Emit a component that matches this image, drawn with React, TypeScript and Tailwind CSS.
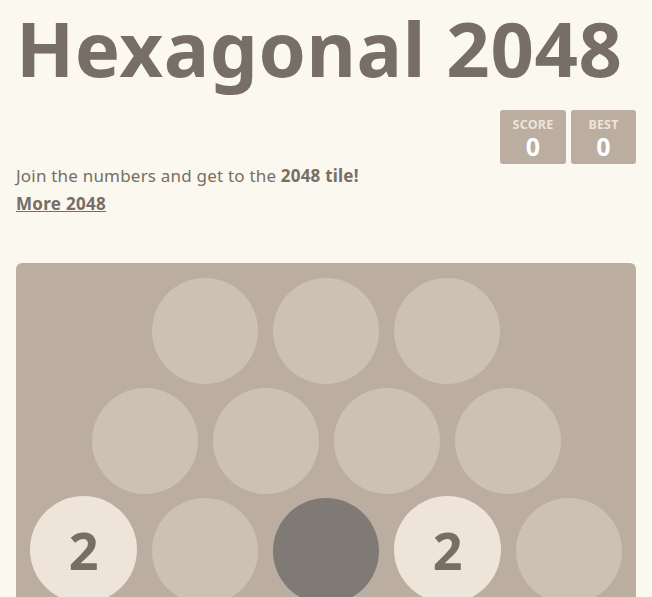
import React from "react";

type Tile = { v?: number; dark?: boolean };

const rows: Tile[][] = [
  [{}, {}, {}],
  [{}, {}, {}, {}],
  [{ v: 2 }, {}, { dark: true }, { v: 2 }, {}],
  [{}, {}, {}, {}],
  [{}, {}, {}],
];

function Cell({ t }: { t: Tile }) {
  if (t.v) {
    return (
      <div className="w-[107px] h-[107px] -mt-[2px] rounded-full bg-[#eee4da] flex items-center justify-center text-[#776e65] text-[52px] font-bold leading-none">
        {t.v}
      </div>
    );
  }
  if (t.dark) {
    return <div className="w-[106px] h-[106px] rounded-full bg-[#7f7a75]" />;
  }
  return <div className="w-[106px] h-[106px] rounded-full bg-[#cdc1b4]" />;
}

function ScoreBox({ label, value, w }: { label: string; value: number; w: string }) {
  return (
    <div className={`${w} h-[54px] rounded-[3px] bg-[#bbada0] flex flex-col items-center pt-[6px]`}>
      <div className="text-[12.5px] font-bold leading-[17px] text-[#eee4da] tracking-[0.2px]">{label}</div>
      <div className="text-[25px] font-bold leading-[27px] text-white">{value}</div>
    </div>
  );
}

export default function App() {
  return (
    <div
      className="min-h-screen bg-[#faf8ef] text-[#776e65] px-[16px]"
      style={{ fontFamily: '"Noto Sans", "Open Sans", sans-serif' }}
    >
      <h1 className="text-[76px] font-bold leading-[80px] pt-[8px] tracking-[0.6px] whitespace-nowrap">Hexagonal 2048</h1>
      <div className="flex justify-end gap-[5px] mt-[22px]">
        <ScoreBox label="SCORE" value={0} w="w-[66px]" />
        <ScoreBox label="BEST" value={0} w="w-[65px]" />
      </div>
      <p className="text-[17px] leading-[28px] -mt-[2px] tracking-[0.2px]">
        Join the numbers and get to the <b>2048 tile!</b>
      </p>
      <a className="text-[17px] font-bold underline leading-[28px] block tracking-[0.3px]">More 2048</a>
      <div className="mt-[45px] w-[620px] bg-[#bbada0] rounded-[6px] pt-[15px] pb-[15px] flex flex-col gap-[4px]">
        {rows.map((r, i) => (
          <div key={i} className="flex justify-center gap-[15px]">
            {r.map((t, j) => (
              <Cell key={j} t={t} />
            ))}
          </div>
        ))}
      </div>
    </div>
  );
}
